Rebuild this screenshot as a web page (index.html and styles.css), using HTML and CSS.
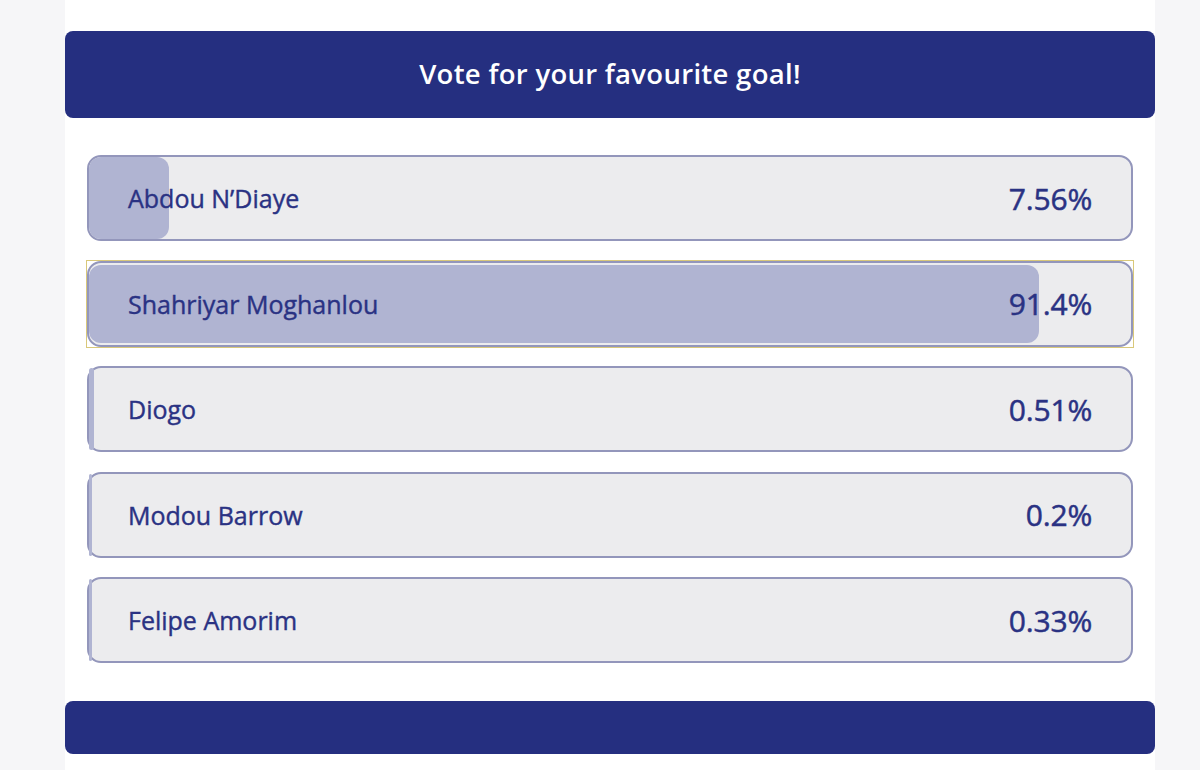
FILE: index.html
```html
<!DOCTYPE html>
<html>
<head>
<meta charset="utf-8">
<link rel="stylesheet" href="styles.css">
<title>Vote for your favourite goal!</title>
</head>
<body>
<div class="poll">
  <div class="poll-head">Vote for your favourite goal!</div>

  <ul class="poll-list">
    <li class="option">
      <span class="fill" style="width:7.65%"></span>
      <span class="name">Abdou N’Diaye</span>
      <span class="pct">7.56%</span>
    </li>
    <li class="option selected">
      <span class="fill" style="width:91.2%"></span>
      <span class="name">Shahriyar Moghanlou</span>
      <span class="pct">91.4%</span>
    </li>
    <li class="option">
      <span class="fill" style="width:0.51%"></span>
      <span class="name">Diogo</span>
      <span class="pct">0.51%</span>
    </li>
    <li class="option">
      <span class="fill" style="width:0.3%"></span>
      <span class="name">Modou Barrow</span>
      <span class="pct">0.2%</span>
    </li>
    <li class="option">
      <span class="fill" style="width:0.33%"></span>
      <span class="name">Felipe Amorim</span>
      <span class="pct">0.33%</span>
    </li>
  </ul>

  <div class="poll-foot"></div>
</div>
</body>
</html>
```

FILE: styles.css
```css
html { height: 100%; }

body {
  margin: 0;
  height: 100%;
  background: #f6f6f8;
  font-family: "Open Sans", "Noto Sans", sans-serif;
  color: #2a3283;
}

.poll {
  width: 1090px;
  margin-left: 65px;
  padding-top: 31px;
  padding-bottom: 1px;
  background: #fff;
}

.poll-head {
  height: 87px;
  display: flex;
  align-items: center;
  justify-content: center;
  background: #252f80;
  border-radius: 8px;
  color: #fff;
  font-size: 27.5px;
  font-weight: 600;
  letter-spacing: 0.3px;
  padding-bottom: 2px;
  box-sizing: border-box;
}

.poll-list {
  list-style: none;
  margin: 0;
  padding: 37px 22px 0;
  display: flex;
  flex-direction: column;
  gap: 19.5px;
}

.option {
  position: relative;
  height: 86px;
  box-sizing: border-box;
  display: flex;
  align-items: center;
  justify-content: space-between;
  padding: 0 39px 0 39px;
  background: #ececee;
  border: 2px solid #9396bb;
  border-radius: 14px;
  font-size: 25px;
  -webkit-text-stroke: 0.4px currentColor;
}

.option .fill {
  position: absolute;
  left: 0;
  top: 0;
  bottom: 0;
  background: #b0b4d2;
  border-radius: 12px;
}

.option.selected .fill {
  top: 2px;
  bottom: 2px;
}

.option.selected::after {
  content: "";
  position: absolute;
  inset: -3px;
  border: 1px solid #d9c87a;
}

.name, .pct { position: relative; }

.pct {
  font-size: 30px;
  letter-spacing: -0.2px;
  -webkit-text-stroke: 0.5px currentColor;
}

.poll-foot {
  height: 53px;
  margin: 38px 0 16px;
  background: #252f80;
  border-radius: 8px;
}
```
